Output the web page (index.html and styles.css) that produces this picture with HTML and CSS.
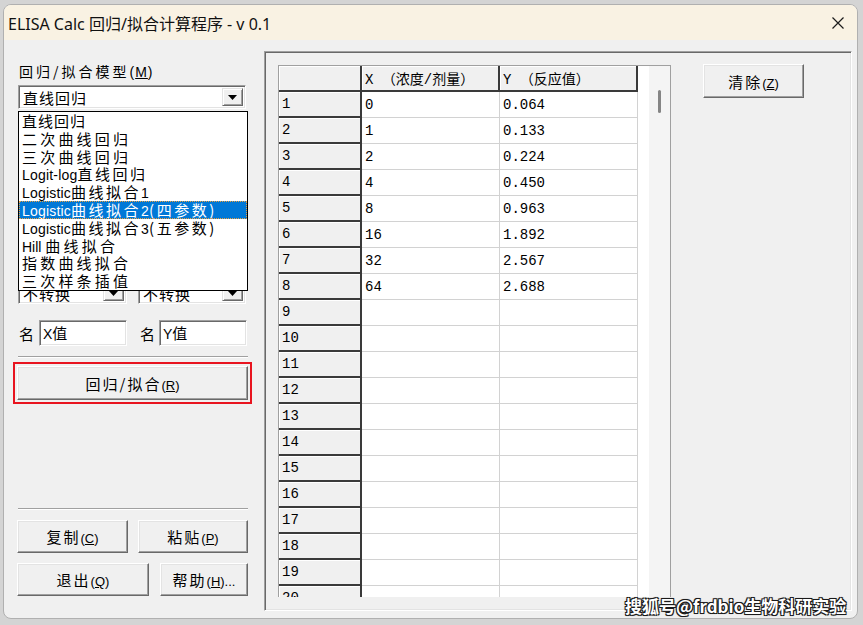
FILE: index.html
```html
<!DOCTYPE html>
<html lang="zh-CN">
<head>
<meta charset="utf-8">
<title>ELISA Calc</title>
<link rel="stylesheet" href="styles.css">
</head>
<body>
<div class="window">
  <div class="titlebar">
    <span class="title">ELISA Calc 回归/拟合计算程序 - v 0.1</span>
    <svg class="close" width="12" height="12" viewBox="0 0 12 12"><path d="M0.5 0.5L11.5 11.5M11.5 0.5L0.5 11.5" stroke="#1c1c1c" stroke-width="1.2" fill="none"/></svg>
  </div>
  <div class="client">
    <div class="leftpanel">
      <div class="label">回归/拟合模型<span class="acc">(<u>M</u>)</span></div>
      <div class="combo-wrap">
        <div class="combo main-combo">
          <span class="combo-text">直线回归</span>
          <span class="combo-btn"><svg width="9" height="5" viewBox="0 0 9 5"><path d="M0 0H9L4.5 5Z" fill="#000"/></svg></span>
        </div>
        <ul class="droplist">
          <li class="t1">直线回归</li>
          <li>二次曲线回归</li>
          <li>三次曲线回归</li>
          <li class="n"><span class="lat">Logit-log</span>直线回归</li>
          <li class="n"><span class="lat">Logistic</span>曲线拟合<span class="lat">1</span></li>
          <li class="n sel"><span class="lat">Logistic</span>曲线拟合<span class="lat">2</span>(四参数)</li>
          <li class="n"><span class="lat">Logistic</span>曲线拟合<span class="lat">3</span>(五参数)</li>
          <li><span class="lat">Hill </span>曲线拟合</li>
          <li>指数曲线拟合</li>
          <li>三次样条插值</li>
        </ul>
      </div>
      <div class="transform-row">
        <div class="combo small-combo">
          <span class="combo-text">不转换</span>
          <span class="combo-btn"><svg width="9" height="5" viewBox="0 0 9 5"><path d="M0 0H9L4.5 5Z" fill="#000"/></svg></span>
        </div>
        <div class="combo small-combo">
          <span class="combo-text">不转换</span>
          <span class="combo-btn"><svg width="9" height="5" viewBox="0 0 9 5"><path d="M0 0H9L4.5 5Z" fill="#000"/></svg></span>
        </div>
      </div>
      <div class="name-row">
        <span class="name-lbl">名</span>
        <div class="edit"><span class="lat">X</span>值</div>
        <span class="name-lbl second">名</span>
        <div class="edit"><span class="lat">Y</span>值</div>
      </div>
      <div class="sep"></div>
      <button class="btn btn-fit">回归/拟合<span class="acc">(<u>R</u>)</span></button>
      <div class="sep sep-low"></div>
      <div class="btn-row">
        <button class="btn btn-copy">复制<span class="acc">(<u>C</u>)</span></button>
        <button class="btn btn-paste">粘贴<span class="acc">(<u>P</u>)</span></button>
      </div>
      <div class="btn-row">
        <button class="btn btn-exit">退出<span class="acc">(<u>Q</u>)</span></button>
        <button class="btn btn-help">帮助<span class="acc">(<u>H</u>)...</span></button>
      </div>
    </div>
    <div class="frame">
      <div class="grid">
        <div class="grid-area">
          <table class="sheet">
            <colgroup><col class="c0"><col class="c1"><col class="c2"></colgroup>
            <thead>
              <tr><th class="corner"></th><th class="colh">X （浓度/剂量）</th><th class="colh">Y （反应值）</th></tr>
            </thead>
            <tbody>
              <tr><th>1</th><td>0</td><td>0.064</td></tr>
              <tr><th>2</th><td>1</td><td>0.133</td></tr>
              <tr><th>3</th><td>2</td><td>0.224</td></tr>
              <tr><th>4</th><td>4</td><td>0.450</td></tr>
              <tr><th>5</th><td>8</td><td>0.963</td></tr>
              <tr><th>6</th><td>16</td><td>1.892</td></tr>
              <tr><th>7</th><td>32</td><td>2.567</td></tr>
              <tr><th>8</th><td>64</td><td>2.688</td></tr>
              <tr><th>9</th><td></td><td></td></tr>
              <tr><th>10</th><td></td><td></td></tr>
              <tr><th>11</th><td></td><td></td></tr>
              <tr><th>12</th><td></td><td></td></tr>
              <tr><th>13</th><td></td><td></td></tr>
              <tr><th>14</th><td></td><td></td></tr>
              <tr><th>15</th><td></td><td></td></tr>
              <tr><th>16</th><td></td><td></td></tr>
              <tr><th>17</th><td></td><td></td></tr>
              <tr><th>18</th><td></td><td></td></tr>
              <tr><th>19</th><td></td><td></td></tr>
              <tr><th>20</th><td></td><td></td></tr>
            </tbody>
          </table>
        </div>
        <div class="vscroll"><div class="thumb"></div></div>
      </div>
      <button class="btn btn-clear">清除<span class="acc">(<u>Z</u>)</span></button>
    </div>
  </div>
</div>
<div class="watermark">搜狐号@frdbio生物科研实验</div>
</body>
</html>
```

FILE: styles.css
```css
* { box-sizing: border-box; }
html, body { margin: 0; padding: 0; }
body {
  width: 863px;
  height: 625px;
  background: #d4d4d4;
  font-family: "Liberation Sans", "Noto Sans CJK SC", sans-serif;
  overflow: hidden;
  position: relative;
  color: #000;
}
.window {
  margin: 4px 0 0 3px;
  width: 855px;
  height: 615px;
  border: 1px solid #b0b0b0;
  border-radius: 8px;
  background: #f0f0f0;
  overflow: hidden;
  display: flex;
  flex-direction: column;
}
.titlebar {
  flex: none;
  height: 35px;
  background: #f9f2e3;
  display: flex;
  align-items: center;
  justify-content: space-between;
  padding: 0 13px 0 4px;
}
.title {
  font-family: "Noto Sans", "Noto Sans CJK SC", sans-serif;
  font-size: 16px;
  color: #111;
}
.close { display: block; }
.client {
  flex: 1;
  display: flex;
  padding: 11px 5px 12px 14px;
}
.leftpanel {
  width: 230px;
  flex: none;
  display: flex;
  flex-direction: column;
}
.label {
  margin-top: 11px;
  height: 18px;
  line-height: 18px;
  font-size: 14px;
  letter-spacing: 3px;
  padding-left: 1px;
  font-family: "Noto Sans CJK SC", sans-serif;
  white-space: nowrap;
}
.acc {
  font-family: "Liberation Sans", sans-serif;
  font-size: 13px;
  letter-spacing: 0;
}
.label .acc { font-size: 14px; letter-spacing: 1px; }
.combo-wrap { position: relative; margin-top: 5px; }
.combo {
  display: flex;
  align-items: stretch;
  background: #fff;
  border: 1px solid;
  border-color: #a0a0a0 #fff #fff #a0a0a0;
  box-shadow: inset 1px 1px 0 #696969, inset -1px -1px 0 #e3e3e3;
  padding: 2px;
}
.main-combo { width: 228px; height: 24px; }
.combo-text {
  flex: 1;
  font-family: "Noto Sans CJK SC", sans-serif;
  font-size: 15px;
  line-height: 19px;
  padding-left: 2px;
  letter-spacing: 1px;
}
.combo-btn {
  width: 21px;
  flex: none;
  background: #f0f0f0;
  border: 1px solid;
  border-color: #e3e3e3 #696969 #696969 #e3e3e3;
  box-shadow: inset 1px 1px 0 #fff, inset -1px -1px 0 #a0a0a0;
  display: flex;
  align-items: center;
  justify-content: center;
}
.combo-btn svg { display: block; }
.droplist {
  position: absolute;
  top: 26px;
  left: 0;
  width: 230px;
  height: 180px;
  margin: 0;
  padding: 0;
  list-style: none;
  background: #fff;
  border: 1px solid #000;
  z-index: 5;
}
.droplist li {
  height: 17.8px;
  line-height: 17.8px;
  padding-left: 3px;
  font-family: "Noto Sans CJK SC", sans-serif;
  font-size: 15px;
  letter-spacing: 3.2px;
  white-space: nowrap;
}
.droplist li.n { letter-spacing: 2.5px; }
.droplist li.t1 { letter-spacing: 1px; }
.droplist li.sel {
  background: #0078d7;
  color: #fff;
  outline: 1px dotted #e9a040;
  outline-offset: -1px;
}
.lat {
  font-family: "Liberation Sans", sans-serif;
  font-size: 14px;
  letter-spacing: 0;
}
.droplist li.n .lat { letter-spacing: 0.2px; }
.transform-row {
  margin-top: 173px;
  display: flex;
  gap: 11px;
}
.small-combo { width: 109px; height: 22px; }
.small-combo + .small-combo { width: 108px; }
.small-combo .combo-text { line-height: 17px; }
.name-row {
  margin-top: 16px;
  display: flex;
  align-items: center;
  height: 26px;
}
.name-lbl {
  width: 21px;
  font-family: "Noto Sans CJK SC", sans-serif;
  font-size: 15px;
  padding-left: 1px;
}
.name-lbl.second { margin-left: 12px; width: 20px; }
.edit {
  width: 88px;
  height: 26px;
  background: #fff;
  border: 1px solid;
  border-color: #a0a0a0 #fff #fff #a0a0a0;
  box-shadow: inset 1px 1px 0 #696969, inset -1px -1px 0 #e3e3e3;
  padding: 2px 3px;
  font-family: "Noto Sans CJK SC", sans-serif;
  font-size: 15px;
  line-height: 20px;
}
.sep {
  margin-top: 10px;
  height: 2px;
  border-top: 1px solid #a0a0a0;
  border-bottom: 1px solid #fff;
}
.sep-low { margin-top: 108px; }
.btn {
  display: block;
  padding: 0;
  background: #f0f0f0;
  border: 1px solid;
  border-color: #fff #696969 #696969 #fff;
  box-shadow: inset -1px -1px 0 #a0a0a0, inset 1px 1px 0 #e3e3e3;
  font-family: "Noto Sans CJK SC", sans-serif;
  font-size: 15px;
  letter-spacing: 2px;
  color: #000;
  text-align: center;
}
.btn-fit {
  margin-top: 8px;
  margin-left: -1px;
  width: 231px;
  height: 34px;
  outline: 2px solid #e8141f;
  outline-offset: 2px;
}
.btn-row { display: flex; margin-top: 10px; margin-left: -1px; }
.btn-row .btn { height: 33px; }
.btn-copy { width: 111px; }
.btn-paste { width: 110px; margin-left: 10px; }
.btn-exit { width: 132px; }
.btn-help { width: 88px; margin-left: 11px; }
.frame {
  flex: 1;
  margin-left: 16px;
  border: 1px solid;
  border-color: #a0a0a0 #fff #fff #a0a0a0;
  box-shadow: inset 1px 1px 0 #696969, inset -1px -1px 0 #e3e3e3;
  padding: 13px;
  display: flex;
  align-items: flex-start;
}
.grid {
  width: 393px;
  height: 532px;
  border: 1px solid #a0a0a0;
  border-bottom: none;
  display: flex;
  background: #fff;
}
.grid-area {
  flex: 1;
  overflow: hidden;
  background: #fff;
}
.sheet {
  border-collapse: separate;
  border-spacing: 0;
  table-layout: fixed;
  width: 359px;
  font-family: "Liberation Mono", "Noto Sans CJK SC", monospace;
  font-size: 14px;
}
.c0 { width: 83px; }
.c1 { width: 138px; }
.c2 { width: 138px; }
.sheet tr { height: 26px; }
.sheet th, .sheet td {
  padding: 0 0 0 3px;
  text-align: left;
  font-weight: normal;
  white-space: nowrap;
  overflow: hidden;
  vertical-align: middle;
}
.sheet th {
  background: #f0f0f0;
  border-right: 2px solid #3a3a3a;
  border-bottom: 2px solid #3a3a3a;
  box-shadow: inset 1px 1px 0 #fff;
}
.sheet td {
  background: #fff;
  border-right: 1px solid #d2d2d2;
  border-bottom: 1px solid #d2d2d2;
}
.vscroll {
  width: 21px;
  flex: none;
  background: #f4f4f4;
  padding: 24px 0 0 9px;
}
.thumb {
  width: 3px;
  height: 23px;
  background: #858585;
  border-radius: 2px;
}
.btn-clear {
  margin-left: 32px;
  width: 101px;
  height: 34px;
  margin-top: -1px;
}
.watermark {
  position: absolute;
  left: 625px;
  top: 593px;
  font-family: "Noto Sans CJK SC", sans-serif;
  font-weight: bold;
  font-size: 17px;
  color: #fff;
  letter-spacing: 0;
  text-shadow: -1px -1px 0 #1a1a1a, 1px -1px 0 #1a1a1a, -1px 1px 0 #1a1a1a, 1px 1px 0 #1a1a1a, 0 0 2px #000;
  white-space: nowrap;
}
```
